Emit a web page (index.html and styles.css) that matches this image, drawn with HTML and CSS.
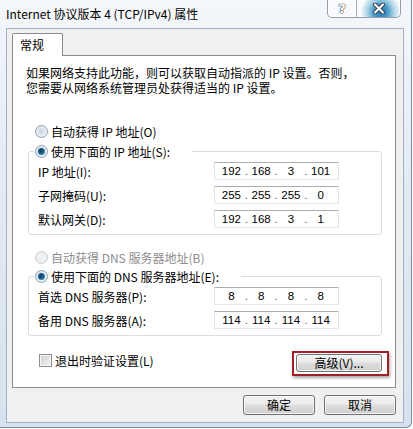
FILE: index.html
```html
<!DOCTYPE html>
<html lang="zh-CN">

<head>
  <meta charset="UTF-8">
  <title>Internet 协议版本 4 (TCP/IPv4) 属性</title>
  <link rel="stylesheet" href="styles.css">
</head>

<body>
  <div class="window">
    <div class="titlebar">
      <span class="title">Internet 协议版本 4 (TCP/IPv4) 属性</span>
      <div class="caption-buttons">
        <span class="cap-btn help">?</span>
        <span class="cap-btn close">
          <svg width="12" height="11" viewBox="0 0 12 11">
            <path d="M2 1.5 L10 9.5 M10 1.5 L2 9.5" stroke="#3d4550" stroke-width="4" stroke-linecap="round" />
            <path d="M2 1.5 L10 9.5 M10 1.5 L2 9.5" stroke="#fff" stroke-width="2" stroke-linecap="round" />
          </svg>
        </span>
      </div>
    </div>

    <div class="client">
      <div class="tabs">
        <span class="tab">常规</span>
      </div>

      <div class="tab-page">
        <p class="intro">如果网络支持此功能，则可以获取自动指派的 IP 设置。否则，<br>您需要从网络系统管理员处获得适当的 IP 设置。</p>

        <div class="radio-row first"><span class="radio"></span>自动获得 IP 地址(O)</div>

        <div class="group">
          <div class="legend"><span class="radio checked"></span>使用下面的 IP 地址(S):</div>
          <div class="field-row">
            <span>IP 地址(I):</span>
            <span class="ip-box"><span>192</span><i>.</i><span>168</span><i>.</i><span>3</span><i>.</i><span>101</span></span>
          </div>
          <div class="field-row">
            <span>子网掩码(U):</span>
            <span class="ip-box"><span>255</span><i>.</i><span>255</span><i>.</i><span>255</span><i>.</i><span>0</span></span>
          </div>
          <div class="field-row">
            <span>默认网关(D):</span>
            <span class="ip-box"><span>192</span><i>.</i><span>168</span><i>.</i><span>3</span><i>.</i><span>1</span></span>
          </div>
        </div>

        <div class="radio-row disabled"><span class="radio"></span>自动获得 DNS 服务器地址(B)</div>

        <div class="group dns">
          <div class="legend"><span class="radio checked"></span>使用下面的 DNS 服务器地址(E):</div>
          <div class="field-row">
            <span>首选 DNS 服务器(P):</span>
            <span class="ip-box"><span>8</span><i>.</i><span>8</span><i>.</i><span>8</span><i>.</i><span>8</span></span>
          </div>
          <div class="field-row">
            <span>备用 DNS 服务器(A):</span>
            <span class="ip-box"><span>114</span><i>.</i><span>114</span><i>.</i><span>114</span><i>.</i><span>114</span></span>
          </div>
        </div>

        <div class="check-row">
          <div class="check-label"><span class="checkbox"></span>退出时验证设置(L)</div>
          <span class="mark"><button class="btn advanced">高级(V)...</button></span>
        </div>
      </div>

      <div class="footer">
        <button class="btn">确定</button>
        <button class="btn">取消</button>
      </div>
    </div>
  </div>
</body>

</html>
```

FILE: styles.css
```css
body {
  margin: 0;
  background: #fff;
  font-family: "Noto Sans CJK SC", sans-serif;
  font-size: 12px;
  color: #000;
}

.window {
  width: 412px;
  height: 428px;
  box-sizing: border-box;
  border-right: 1px solid #7b8ca2;
  border-bottom: 1px solid #7b8ca2;
  border-bottom-right-radius: 6px;
  background: linear-gradient(#f4f7fb, #e3ebf5 40%, #d6e2ef);
}

/* title bar */

.titlebar {
  display: flex;
  align-items: flex-start;
  height: 28px;
}

.title {
  margin: 6px 0 0 6px;
  line-height: 16px;
  text-shadow: 0 0 6px #fff, 0 0 6px #fff;
}

.caption-buttons {
  display: flex;
  margin-left: auto;
  margin-right: 10px;
  height: 18px;
  box-sizing: border-box;
  border: 1px solid rgba(70, 80, 100, 0.55);
  border-top: none;
  border-radius: 0 0 5px 5px;
  background: rgba(255, 255, 255, 0.4);
  box-shadow: inset 0 0 0 1px rgba(255, 255, 255, 0.7);
  overflow: hidden;
}

.cap-btn {
  display: flex;
  align-items: center;
  justify-content: center;
}

.help {
  width: 28px;
  border-right: 1px solid rgba(70, 80, 100, 0.45);
  font-family: "DejaVu Sans", sans-serif;
  font-size: 13px;
  font-weight: bold;
  color: #fff;
  text-shadow: 0 0 1px #333, 0 0 1px #333, 0 0 1px #333;
}

.close {
  width: 43px;
  background: radial-gradient(circle at 55% 70%, #2a78b4 0, #3f95c4 25%, rgba(120, 185, 215, 0.6) 50%, rgba(255, 255, 255, 0) 75%);
}

/* dialog body */

.client {
  width: 398px;
  margin-left: 6px;
  box-sizing: border-box;
  border: 1px solid #a3b2c4;
  background: #f0f0f0;
  padding: 4px 7px 7px 5px;
}

.tabs {
  display: flex;
}

.tab {
  position: relative;
  z-index: 1;
  width: 51px;
  height: 23px;
  box-sizing: border-box;
  margin-bottom: -1px;
  padding-left: 7px;
  border: 1px solid #898c95;
  border-bottom: none;
  border-radius: 2px 2px 0 0;
  background: #fff;
  line-height: 21px;
}

.tab-page {
  border: 1px solid #898c95;
  background: #fff;
  padding-bottom: 11px;
}

.intro {
  margin: 9px 0 0 13px;
  line-height: 15px;
}

.radio-row {
  display: flex;
  align-items: center;
  gap: 3px;
  height: 16px;
  margin: 14px 0 0 22px;
}

.radio-row.first {
  margin-top: 28px;
}

.radio-row.disabled {
  color: #8d8d8d;
}

.radio {
  position: relative;
  flex: none;
  width: 13px;
  height: 13px;
  box-sizing: border-box;
  border: 1px solid #8aa0b6;
  border-radius: 50%;
  background: radial-gradient(circle at 45% 45%, #c6d2dd, #e9eef3 60%, #fbfcfd);
}

.radio.checked::after {
  content: "";
  position: absolute;
  left: 2px;
  top: 2px;
  width: 7px;
  height: 7px;
  border-radius: 50%;
  background: radial-gradient(circle at 40% 40%, #0e3c5e 0, #1d5f8c 45%, #62bde6 100%);
}

.disabled .radio {
  border-color: #c5cbd1;
  background: #eef0f2;
}

/* group boxes */

.group {
  margin: 12px 13px 0 15px;
  padding: 0 42px 6px 9px;
  border: 1px solid #d5dfe5;
  border-radius: 3px;
}

.group.dns {
  margin-top: 11px;
}

.legend {
  display: flex;
  align-items: center;
  gap: 3px;
  width: fit-content;
  height: 16px;
  margin: -9px 0 0 -4px;
  padding: 0 22px 0 1px;
  background: #fff;
}

.field-row {
  display: flex;
  justify-content: space-between;
  align-items: center;
  height: 18px;
  margin-top: 6px;
}

.legend + .field-row {
  margin-top: 3px;
}

.ip-box {
  display: flex;
  align-items: center;
  width: 125px;
  height: 18px;
  box-sizing: border-box;
  padding: 0 4px 0 3px;
  border: 1px solid #e2e3ea;
  border-top-color: #abadb3;
  border-bottom-color: #e3e9ef;
  font-family: "Liberation Sans", sans-serif;
  font-size: 11.5px;
}

.ip-box span {
  flex: 1;
  text-align: center;
}

.ip-box i {
  width: 3px;
  font-style: normal;
  color: #555;
}

/* bottom of the tab page */

.check-row {
  display: flex;
  justify-content: space-between;
  align-items: flex-start;
  margin: 15px 6px 0 26px;
}

.check-label {
  display: flex;
  align-items: center;
  gap: 3px;
  height: 16px;
  margin-top: 1px;
}

.checkbox {
  flex: none;
  width: 13px;
  height: 13px;
  box-sizing: border-box;
  border: 1px solid #8f8f8f;
  background: linear-gradient(135deg, #cfcfcf, #f4f4f4);
  box-shadow: inset 0 0 0 1px #f7f7f7;
}

.mark {
  display: flex;
  padding: 1px 5px 2px 2px;
  border: 2px solid #a51d26;
  box-shadow: 1px 2px 3px rgba(0, 0, 0, 0.35);
}

.btn {
  height: 20px;
  width: 72px;
  box-sizing: border-box;
  padding: 0;
  border: 1px solid #707070;
  border-radius: 3px;
  background: linear-gradient(#f2f2f2, #ebebeb 45%, #dddddd 50%, #cfcfcf);
  box-shadow: inset 0 0 0 1px rgba(255, 255, 255, 0.75);
  font-family: inherit;
  font-size: 12px;
  line-height: 18px;
  color: #000;
}

.btn.advanced {
  width: 86px;
  height: 18px;
  line-height: 16px;
}

.footer {
  display: flex;
  justify-content: flex-end;
  gap: 9px;
  margin-top: 7px;
}
```
